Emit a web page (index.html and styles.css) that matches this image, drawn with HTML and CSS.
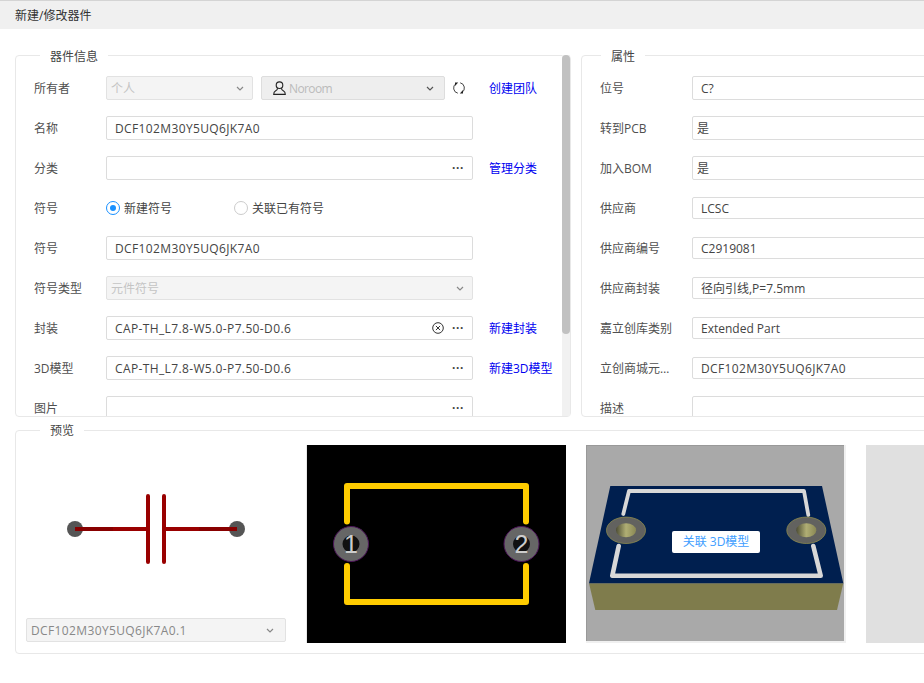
FILE: index.html
```html
<!DOCTYPE html>
<html lang="zh-CN">
<head>
<meta charset="utf-8">
<title>新建/修改器件</title>
<link rel="stylesheet" href="styles.css">
</head>
<body>
<div class="app">
  <header class="titlebar">新建/修改器件</header>
  <div class="top">
    <section class="panel panel-info">
      <div class="legend">器件信息</div>
      <div class="scroller">
        <div class="row">
          <label class="label">所有者</label>
          <div class="control-group">
            <div class="field select owner disabled"><span class="muted">个人</span><svg class="chev" viewBox="0 0 8 5"><path d="M1 1l3 3 3-3"/></svg></div>
            <div class="field select team"><svg class="user" viewBox="0 0 13 14"><circle cx="6.5" cy="4.2" r="3.3"/><path d="M4.6 7.2C4.6 8.8 3.6 9.4 2.4 10 1.2 10.6.7 11.5.7 13.4H12.3C12.3 11.5 11.8 10.6 10.6 10 9.4 9.4 8.4 8.8 8.4 7.2"/></svg><span class="muted strong">Noroom</span><svg class="chev dark" viewBox="0 0 8 5"><path d="M1 1l3 3 3-3"/></svg></div>
            <svg class="refresh" viewBox="0 0 12 12"><path d="M7.2.8A5.3 5.3 0 0 1 9 10.4M4.8 11.2A5.3 5.3 0 0 1 3 1.6"/><path class="tip" d="M10 8V11.5H6.8ZM2 4V.5H5.2Z"/></svg>
          </div>
          <a class="link">创建团队</a>
        </div>
        <div class="row">
          <label class="label">名称</label>
          <div class="field main-field"><span class="spaced">DCF102M30Y5UQ6JK7A0</span></div>
        </div>
        <div class="row">
          <label class="label">分类</label>
          <div class="field main-field"><span class="dots">···</span></div>
          <a class="link">管理分类</a>
        </div>
        <div class="row">
          <label class="label">符号</label>
          <div class="radios">
            <span class="radio-item first"><i class="radio on"></i>新建符号</span>
            <span class="radio-item"><i class="radio"></i>关联已有符号</span>
          </div>
        </div>
        <div class="row">
          <label class="label">符号</label>
          <div class="field main-field"><span class="spaced">DCF102M30Y5UQ6JK7A0</span></div>
        </div>
        <div class="row">
          <label class="label">符号类型</label>
          <div class="field main-field select disabled"><span class="muted">元件符号</span><svg class="chev" viewBox="0 0 8 5"><path d="M1 1l3 3 3-3"/></svg></div>
        </div>
        <div class="row">
          <label class="label">封装</label>
          <div class="field main-field"><span class="spaced">CAP-TH_L7.8-W5.0-P7.50-D0.6</span><svg class="clear" viewBox="0 0 12 12"><circle cx="6" cy="6" r="5.3"/><path d="M3.9 3.9l4.2 4.2M8.1 3.9L3.9 8.1"/></svg><span class="dots">···</span></div>
          <a class="link">新建封装</a>
        </div>
        <div class="row">
          <label class="label">3D模型</label>
          <div class="field main-field"><span class="spaced">CAP-TH_L7.8-W5.0-P7.50-D0.6</span><span class="dots">···</span></div>
          <a class="link">新建3D模型</a>
        </div>
        <div class="row">
          <label class="label">图片</label>
          <div class="field main-field"><span class="dots">···</span></div>
        </div>
      </div>
      <div class="scrollbar"><div class="thumb"></div></div>
    </section>
    <section class="panel panel-attrs">
      <div class="legend">属性</div>
      <div class="attrs">
        <div class="row attr"><label class="label">位号</label><div class="field wide">C?</div></div>
        <div class="row attr"><label class="label">转到PCB</label><div class="field wide tight">是</div></div>
        <div class="row attr"><label class="label">加入BOM</label><div class="field wide tight">是</div></div>
        <div class="row attr"><label class="label">供应商</label><div class="field wide short">LCSC</div></div>
        <div class="row attr"><label class="label">供应商编号</label><div class="field wide short">C2919081</div></div>
        <div class="row attr"><label class="label">供应商封装</label><div class="field wide short">径向引线,P=7.5mm</div></div>
        <div class="row attr"><label class="label">嘉立创库类别</label><div class="field wide short">Extended Part</div></div>
        <div class="row attr"><label class="label">立创商城元…</label><div class="field wide short"><span class="spaced">DCF102M30Y5UQ6JK7A0</span></div></div>
        <div class="row attr"><label class="label">描述</label><div class="field wide"></div></div>
      </div>
    </section>
  </div>
  <section class="panel panel-preview">
    <div class="legend">预览</div>
    <div class="previews">
      <div class="tile symbol">
        <svg class="symbol-art" viewBox="26 445 260 173">
          <circle cx="75" cy="529" r="8" fill="#555"/>
          <circle cx="237" cy="529" r="8" fill="#555"/>
          <path d="M75 529H146M166 529H237" stroke="#990000" stroke-width="4" fill="none"/>
          <path d="M75 529H113M199 529H237" stroke="#880000" stroke-width="4" fill="none"/>
          <path d="M148 496V562M164 496V562" stroke="#990000" stroke-width="4" stroke-linecap="round" fill="none"/>
        </svg>
        <div class="field select disabled version"><span class="spaced">DCF102M30Y5UQ6JK7A0.1</span><svg class="chev" viewBox="0 0 8 5"><path d="M1 1l3 3 3-3"/></svg></div>
      </div>
      <div class="tile pcb">
        <svg viewBox="306 445 260 198">
          <rect x="306" y="445" width="260" height="198" fill="#000"/>
          <rect x="306" y="445" width="1" height="198" fill="#e8e8e8"/>
          <path d="M347 521.5V486H526V521.5M347 566V602H526V566" fill="none" stroke="#ffcc00" stroke-width="6" stroke-linecap="round" stroke-linejoin="round"/>
          <g class="pad">
            <circle cx="351" cy="544" r="17.5" fill="#666" stroke="#4c1359"/>
            <circle cx="351" cy="544" r="8.5" fill="#111"/>
            <text x="351" y="553" class="pad-num">1</text>
          </g>
          <g class="pad">
            <circle cx="521.5" cy="544" r="17.5" fill="#666" stroke="#4c1359"/>
            <circle cx="521.5" cy="544" r="8.5" fill="#111"/>
            <text x="521.5" y="553" class="pad-num">2</text>
          </g>
        </svg>
      </div>
      <div class="tile model">
        <svg viewBox="586 445 260 198">
          <defs>
            <linearGradient id="hole" x1="0" x2="1" y1="0" y2="0">
              <stop offset="0" stop-color="#4e4e36"/>
              <stop offset=".5" stop-color="#b0ae74"/>
              <stop offset="1" stop-color="#8a8854"/>
            </linearGradient>
          </defs>
          <rect x="586" y="445" width="260" height="198" fill="#f0f0f0"/>
          <rect x="586" y="445" width="258" height="196" fill="#a9a9a9"/>
          <path d="M586 445.5H844M586.5 445V641" stroke="#999" fill="none"/>
          <path d="M589 583.3H843.3L837 610H595.3Z" fill="#7f7c4c"/>
          <path d="M610.3 486H822L843.3 583.3H589Z" fill="#001f4f"/>
          <path d="M623.3 514L629 491H804L808.3 515" fill="none" stroke="#d8d8d8" stroke-width="3.8" stroke-linecap="round" stroke-linejoin="round"/>
          <path d="M618.7 546L612.3 575.7H820.7L813.3 546" fill="none" stroke="#d8d8d8" stroke-width="4.6" stroke-linecap="round" stroke-linejoin="round"/>
          <ellipse cx="626" cy="530.3" rx="19.5" ry="13.2" fill="#62625f" stroke="#8b8a4e" stroke-width=".8"/>
          <ellipse cx="626" cy="530.3" rx="10" ry="7" fill="url(#hole)"/>
          <ellipse cx="806.3" cy="530.3" rx="19.5" ry="13.2" fill="#62625f" stroke="#8b8a4e" stroke-width=".8"/>
          <ellipse cx="806.3" cy="530.3" rx="10" ry="7" fill="url(#hole)"/>
        </svg>
        <div class="assoc">关联 3D模型</div>
      </div>
      <div class="tile blank"></div>
    </div>
  </section>
</div>
</body>
</html>
```
FILE: styles.css
```css
* { box-sizing: border-box; }
html, body { margin: 0; padding: 0; background: #fff; }
body {
  font-family: "Open Sans", "Noto Sans CJK SC", sans-serif;
  font-size: 12px;
  color: #444;
  overflow: hidden;
}
.app { width: 924px; height: 683px; overflow: hidden; }
.titlebar {
  height: 29px;
  border-top: 1px solid #d4d4d4;
  background: #f0f0f0;
  padding-left: 15px;
  line-height: 29px;
  color: #333;
}
.top {
  display: flex;
  gap: 10px;
  width: 1300px;
  margin: 26px 0 0 15px;
  height: 362px;
}
.panel {
  position: relative;
  border: 1px solid #e8e8e8;
  border-radius: 4px;
  background: #fff;
}
.legend {
  position: absolute;
  top: -8px;
  left: 24px;
  padding: 0 10px;
  background: #fff;
  line-height: 18px;
  color: #444;
}
.panel-attrs .legend { left: 19px; }
.panel-preview .legend { top: -9px; }
.panel-info { width: 556px; flex: none; }
.panel-attrs { width: 600px; flex: none; }
.scroller {
  height: 100%;
  overflow: hidden;
  padding: 12px 0 0 18px;
}
.scrollbar {
  position: absolute;
  top: -1px;
  right: 0;
  bottom: 0;
  width: 8px;
  background: #f1f1f1;
}
.thumb { height: 279px; background: #c1c1c1; border-radius: 4px; }
.attrs { height: 100%; overflow: hidden; padding: 12px 0 0 18px; }
.row { display: flex; align-items: center; height: 40px; }
.label { width: 72px; flex: none; color: #4f4f4f; }
.attr .label { width: 92px; }
.field {
  position: relative;
  display: flex;
  align-items: center;
  height: 24px;
  padding: 0 8px;
  border: 1px solid #dcdcdc;
  border-radius: 2px;
  background: #fff;
  color: #444;
  white-space: nowrap;
}
.spaced { letter-spacing: .37px; }
.main-field { width: 367px; flex: none; }
.wide { width: 480px; flex: none; }
.tight { padding-left: 4px; }
.short { height: 22px; }
.control-group { display: flex; align-items: center; width: 367px; flex: none; }
.select { justify-content: space-between; padding: 0 4px; }
.owner { width: 147px; }
.team { width: 184px; margin-left: 8px; background: #eee; border-color: #ddd; justify-content: flex-start; padding-left: 11px; }
.disabled { background: #f4f4f4; border-color: #e2e2e2; }
.main-field.select { padding-right: 4px; }
.muted { color: #c4c4c4; }
.strong { color: #bbb; margin-left: 3px; letter-spacing: -.6px; }
.chev { width: 8px; height: 5px; margin-right: 4px; fill: none; stroke: #888; stroke-width: 1.2; }
.chev.dark { stroke: #555; margin-left: auto; margin-right: 6px; }
.user { width: 13px; height: 14px; flex: none; fill: none; stroke: #222; stroke-width: 1.1; }
.refresh { width: 12px; height: 12px; margin-left: 8px; fill: none; stroke: #444; stroke-width: 1; }
.refresh .tip { fill: #222; stroke: none; }
.link { margin-left: 16px; color: #0000f0; white-space: nowrap; cursor: pointer; }
.dots {
  position: absolute;
  right: 8px;
  top: 50%;
  transform: translateY(-50%);
  font-family: "Liberation Sans", sans-serif;
  font-size: 12px;
  font-weight: 700;
  line-height: 1;
  color: #444;
}
.clear {
  position: absolute;
  right: 28px;
  top: 5px;
  width: 12px;
  height: 12px;
  fill: none;
  stroke: #333;
  stroke-width: 1;
}
.radios { display: flex; align-items: center; }
.radio-item { display: flex; align-items: center; color: #444; }
.radio-item.first { width: 128px; }
.radio {
  display: block;
  width: 14px;
  height: 14px;
  margin-right: 4px;
  border: 1px solid #ccc;
  border-radius: 50%;
  background: #fff;
}
.radio.on { border-color: #1890ff; position: relative; }
.radio.on::after {
  content: "";
  position: absolute;
  left: 3px;
  top: 3px;
  width: 6px;
  height: 6px;
  border-radius: 50%;
  background: #1890ff;
}
.panel-preview { width: 1300px; margin: 13px 0 0 15px; height: 224px; padding: 14px 10px 10px; }
.previews { display: flex; gap: 20px; }
.tile { position: relative; width: 260px; height: 198px; flex: none; }
.tile > svg { display: block; width: 260px; }
.pcb > svg, .model > svg { height: 198px; }
.symbol { display: flex; flex-direction: column; justify-content: flex-start; }
.symbol-art { height: 173px; }
.version { height: 24px; width: 260px; color: #888; font-size: 12px; padding-left: 4px; }
.version .chev { margin-right: 7px; }
.blank { background: #e0e0e0; }
.pad-num { font-family: "Liberation Sans", sans-serif; font-size: 25px; fill: #ccc; text-anchor: middle; }
.assoc {
  position: absolute;
  left: 86px;
  top: 86px;
  width: 88px;
  height: 22px;
  border-radius: 2px;
  background: #fff;
  color: #409eff;
  text-align: center;
  line-height: 22px;
  white-space: nowrap;
}
```
